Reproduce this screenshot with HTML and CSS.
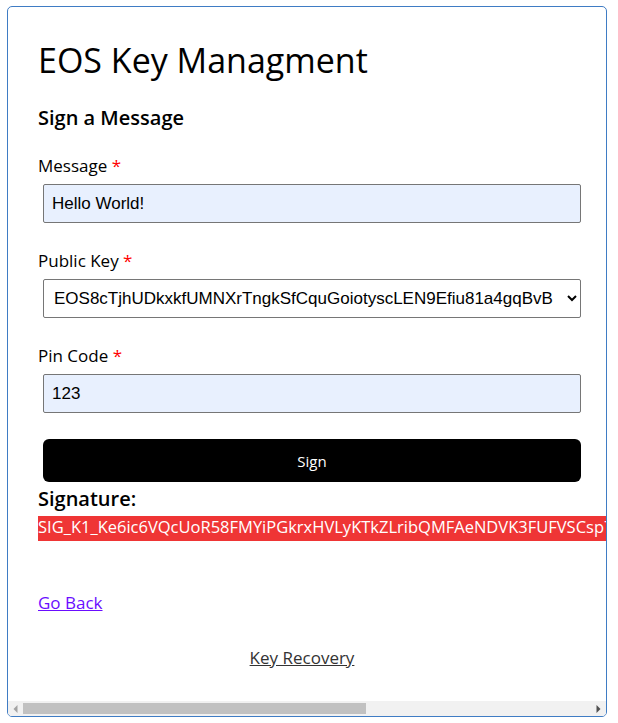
FILE: index.html
```html
<!DOCTYPE html>
<html lang="en">
<head>
<meta charset="utf-8">
<title>EOS Key Managment</title>
<link rel="stylesheet" href="styles.css">
</head>
<body>
<div class="card">
  <div class="scroll">
    <h1 class="title">EOS Key Managment</h1>
    <h2 class="subtitle">Sign a Message</h2>
    <form class="form">
      <label class="label">Message <span class="req">*</span></label>
      <input class="field field-filled" type="text" value="Hello World!">
      <label class="label label-gap">Public Key <span class="req">*</span></label>
      <select class="field select">
        <option>EOS8cTjhUDkxkfUMNXrTngkSfCquGoiotyscLEN9Efiu81a4gqBvB</option>
      </select>
      <label class="label label-gap">Pin Code <span class="req">*</span></label>
      <input class="field field-filled" type="text" value="123">
      <button class="btn" type="button">Sign</button>
    </form>
    <div class="sig-title">Signature:</div>
    <div class="sig-value">SIG_K1_Ke6ic6VQcUoR58FMYiPGkrxHVLyKTkZLribQMFAeNDVK3FUFVSCsp7nXqT2bWm4HdGZyPrJc8sLkV5aEhN3tQfUwY9oBzR</div>
    <a class="back" href="#">Go Back</a>
    <div class="footer"><a class="recovery" href="#">Key Recovery</a></div>
  </div>
  <div class="hscroll" aria-hidden="true">
    <div class="arrow">
      <svg width="5" height="8" viewBox="0 0 5 8"><polygon points="4.5,0 4.5,8 0.5,4" fill="#a3a3a3"/></svg>
    </div>
    <div class="track"><div class="thumb"></div></div>
    <div class="arrow">
      <svg width="5" height="8" viewBox="0 0 5 8"><polygon points="0.5,0 0.5,8 4.5,4" fill="#505050"/></svg>
    </div>
  </div>
</div>
</body>
</html>
```

FILE: styles.css
```css
html, body {
  margin: 0;
  background: #ffffff;
}
body {
  font-family: "Open Sans", sans-serif;
  color: #000;
}
.card {
  box-sizing: border-box;
  width: 600px;
  height: 711px;
  margin: 6px 0 0 7px;
  border: 1px solid #3f7cc4;
  border-radius: 5px;
  display: flex;
  flex-direction: column;
  overflow: hidden;
}
.scroll {
  flex: 1;
  min-height: 0;
  padding: 33px 30px 0;
  overflow: hidden;
}
.title {
  margin: 0;
  font-size: 34px;
  line-height: 40px;
  font-weight: 500;
}
.subtitle {
  margin: 24px 0 0;
  font-size: 20px;
  line-height: 28px;
  font-weight: 600;
}
.form {
  margin: 0;
}
.label {
  display: block;
  margin-top: 22px;
  font-size: 17px;
  line-height: 24px;
}
.label-gap {
  margin-top: 26px;
}
.req {
  color: #f00;
}
.field {
  display: block;
  box-sizing: border-box;
  width: 100%;
  height: 39px;
  margin: 6px 0 0 5px;
  padding: 0 8px;
  border: 1px solid #767676;
  border-radius: 2px;
  font-family: "Liberation Sans", Arial, sans-serif;
  font-size: 17px;
  color: #000;
}
.field-filled {
  background: #e8f0fe;
}
.select {
  background: #fff;
  padding: 0 6px;
}
.btn {
  display: block;
  box-sizing: border-box;
  width: 100%;
  height: 43px;
  margin: 26px 0 0 5px;
  border: none;
  border-radius: 6px;
  background: #000;
  color: #fff;
  font-family: "Open Sans", sans-serif;
  font-size: 15px;
}
.sig-title {
  margin-top: 3px;
  font-size: 20px;
  line-height: 28px;
  font-weight: 600;
}
.sig-value {
  width: max-content;
  margin-top: 3px;
  height: 25px;
  line-height: 22px;
  background: #ef3535;
  color: #fff;
  font-size: 16.5px;
  white-space: nowrap;
}
.back {
  display: inline-block;
  margin-top: 50px;
  font-size: 17px;
  line-height: 24px;
  color: #6a0dff;
}
.footer {
  margin-top: 31px;
  padding-right: 10px;
  text-align: center;
  font-size: 17px;
  line-height: 24px;
}
.recovery {
  color: #333;
}
.hscroll {
  flex: none;
  height: 15px;
  display: flex;
  background: #f1f1f1;
}
.arrow {
  width: 15px;
  display: flex;
  align-items: center;
  justify-content: center;
}
.track {
  flex: 1;
  display: flex;
  align-items: center;
}
.thumb {
  width: 343px;
  height: 11px;
  background: #c1c1c1;
}
```
